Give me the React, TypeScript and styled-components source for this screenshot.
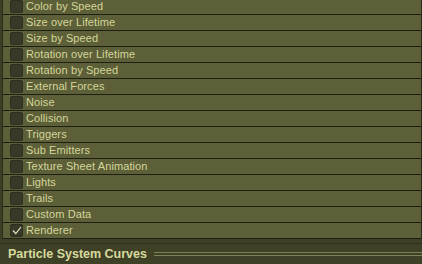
import React from "react";
import styled, { createGlobalStyle } from "styled-components";

const GlobalStyle = createGlobalStyle`
    html, body {
        margin: 0;
        padding: 0;
        background: #3e4027;
        overflow: hidden;
    }
`;

const modules = [
    "Color by Speed",
    "Size over Lifetime",
    "Size by Speed",
    "Rotation over Lifetime",
    "Rotation by Speed",
    "External Forces",
    "Noise",
    "Collision",
    "Triggers",
    "Sub Emitters",
    "Texture Sheet Animation",
    "Lights",
    "Trails",
    "Custom Data",
    "Renderer",
];

const Panel = styled.div`
    width: 422px;
    height: 264px;
    display: flex;
    flex-direction: column;
    font-family: "Liberation Sans", Arial, sans-serif;
    overflow: hidden;
`;

const ModuleList = styled.div`
    display: flex;
    flex-direction: column;
    margin-top: -1px;
    padding-left: 2px;
    background: #3c3e25;
`;

const Row = styled.div`
    height: 15px;
    display: flex;
    align-items: center;
    gap: 3px;
    padding-left: 7px;
    background: #5c5f37;
    border-bottom: 1px solid #1f2014;
    border-left: 1px solid #2c2d1c;
    border-right: 1px solid #2c2d1c;
`;

const Box = styled.div`
    width: 11px;
    height: 11px;
    flex: none;
    background: #383928;
    border: 1px solid #2d2e1e;
    border-radius: 2px;
    display: flex;
    align-items: center;
    justify-content: center;
`;

const Label = styled.span`
    font-size: 11px;
    color: #d5d69a;
    line-height: 15px;
    letter-spacing: 0.1px;
    white-space: nowrap;
`;

const Gap = styled.div`
    height: 4px;
    background: #3d3f26;
    border-bottom: 1px solid #2f3020;
`;

const Header = styled.div`
    flex: 1;
    display: flex;
    align-items: center;
    gap: 7px;
    padding: 0 0 0 8px;
    background: #3f4127;
`;

const Title = styled.span`
    font-size: 12.5px;
    font-weight: bold;
    color: #d7d99c;
    white-space: nowrap;
`;

const Rule = styled.div`
    flex: 1;
    height: 2px;
    border-top: 1px solid #7d8153;
    border-bottom: 1px solid #7d8153;
`;

const Check = () => (
    <svg width="10" height="9" viewBox="0 0 10 9">
        <path d="M1 4.5 L3.8 7.5 L9 1" fill="none" stroke="#e2e3c4" strokeWidth="1.2" />
    </svg>
);

const App = () => (
    <Panel>
        <GlobalStyle />
        <ModuleList>
            {modules.map((name) => (
                <Row key={name}>
                    <Box>{name === "Renderer" && <Check />}</Box>
                    <Label>{name}</Label>
                </Row>
            ))}
        </ModuleList>
        <Gap />
        <Header>
            <Title>Particle System Curves</Title>
            <Rule />
        </Header>
    </Panel>
);

export default App;
